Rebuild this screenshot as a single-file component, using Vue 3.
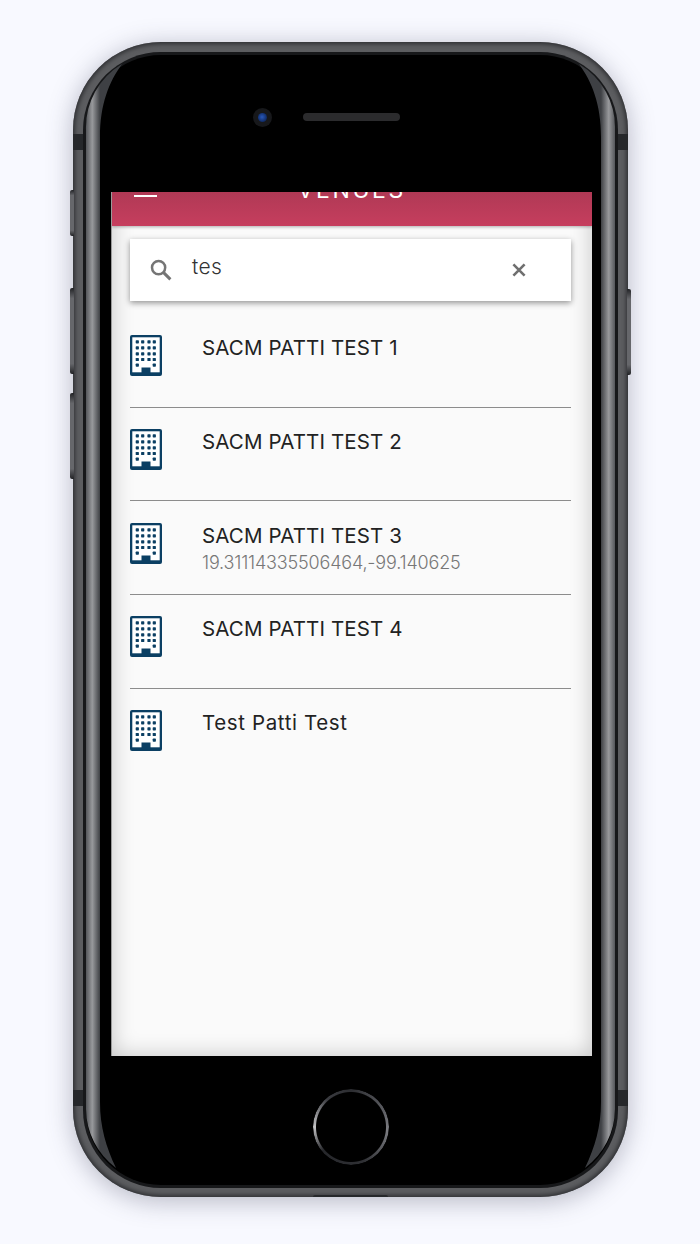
<template>
  <div class="page">
    <div class="phone">
      <span class="side-btn mute"></span>
      <span class="side-btn vol-up"></span>
      <span class="side-btn vol-down"></span>
      <span class="side-btn power"></span>
      <span class="band band-left-top"></span>
      <span class="band band-right-top"></span>
      <span class="band band-left-bottom"></span>
      <span class="band band-right-bottom"></span>
      <span class="bottom-notch"></span>

      <div class="rim">
        <div class="face">
          <div class="top-bezel">
            <div class="camera"><span class="lens"></span></div>
            <div class="speaker"></div>
          </div>

          <div class="screen">
            <header class="app-bar">
              <span class="menu-bar"></span>
              <span class="app-title">VENUES</span>
            </header>

            <div class="search-card">
              <svg class="search-icon" viewBox="0 0 22 22" fill="none" stroke="#757575">
                <circle cx="8.6" cy="8.6" r="6.6" stroke-width="2.5" />
                <path d="M13.6 13.6 L20.4 20.4" stroke-width="3" />
              </svg>
              <span class="search-text">tes</span>
              <svg class="clear-icon" viewBox="0 0 14 14" stroke="#6f6f6f" stroke-width="2.6">
                <path d="M1.4 1.4 L12.6 12.6 M12.6 1.4 L1.4 12.6" />
              </svg>
            </div>

            <div class="venue-list">
              <div v-for="venue in venues" :key="venue.name" class="venue-row">
                <svg class="building" viewBox="0 0 32 41">
                  <rect width="32" height="41" rx="2" fill="#0b3f63" />
                  <rect x="2.3" y="2.3" width="27.4" height="35" fill="#fff" />
                  <rect
                    v-for="(dot, i) in windowDots"
                    :key="i"
                    :x="dot.x"
                    :y="dot.y"
                    width="3.2"
                    height="3.2"
                    rx="0.7"
                    fill="#0b3f63"
                  />
                  <rect x="11.5" y="32.5" width="9" height="7" fill="#0b3f63" />
                </svg>
                <div class="venue-text">
                  <div class="venue-name" :class="{ mixed: venue.mixed }">{{ venue.name }}</div>
                  <div v-if="venue.coords" class="venue-coords">{{ venue.coords }}</div>
                </div>
              </div>
            </div>
          </div>

          <div class="bottom-bezel">
            <div class="home-btn"></div>
          </div>
        </div>
      </div>

      <svg class="sheen" viewBox="0 0 555 1155" fill="none">
        <defs>
          <linearGradient id="sheenL" gradientUnits="userSpaceOnUse" x1="13" x2="27" y1="0" y2="0">
            <stop offset="0" stop-color="#55575b" />
            <stop offset="0.45" stop-color="#98999c" />
            <stop offset="1" stop-color="#3e4044" />
          </linearGradient>
          <linearGradient id="sheenR" gradientUnits="userSpaceOnUse" x1="528" x2="542" y1="0" y2="0">
            <stop offset="0" stop-color="#3e4044" />
            <stop offset="0.55" stop-color="#98999c" />
            <stop offset="1" stop-color="#55575b" />
          </linearGradient>
        </defs>
        <path fill="url(#sheenL)" d="M13 88 A74 74 0 0 1 49 22 C36 40 27 62 27 95 L27 1060 C27 1085 33 1105 43 1126 A74 74 0 0 1 13 1067 Z" />
        <path fill="url(#sheenR)" d="M542 88 A74 74 0 0 0 506 22 C519 40 528 62 528 95 L528 1060 C528 1085 522 1105 512 1126 A74 74 0 0 0 542 1067 Z" />
      </svg>
    </div>
  </div>
</template>

<script setup>
const venues = [
  { name: 'SACM PATTI TEST 1' },
  { name: 'SACM PATTI TEST 2' },
  { name: 'SACM PATTI TEST 3', coords: '19.31114335506464,-99.140625' },
  { name: 'SACM PATTI TEST 4' },
  { name: 'Test Patti Test', mixed: true },
];

const windowDots = [];
const cols = [5.7, 11.1, 17.4, 22.7];
const rows = [5.2, 11.2, 17.2, 22.9, 28.6];
rows.forEach((y, r) => {
  cols.forEach((x, c) => {
    if (r === 4 && (c === 1 || c === 2)) return;
    windowDots.push({ x, y });
  });
});
</script>

<style>
html,
body {
  margin: 0;
  background: #f8f9ff;
}
</style>

<style scoped>
.page {
  width: 700px;
  height: 1244px;
  padding-top: 42px;
  box-sizing: border-box;
  display: flex;
  justify-content: center;
  background: #f8f9ff;
  overflow: hidden;
  font-family: Inter, 'Liberation Sans', sans-serif;
}

.phone {
  position: relative;
  width: 555px;
  height: 1155px;
  margin-left: 1px;
  box-sizing: border-box;
  padding: 10px 10px 9px;
  border-radius: 88px;
  background: #5c5d60;
  box-shadow: inset 0 0 4px 2px #2f3033, 0 4px 26px rgba(60, 65, 90, 0.36);
}

.rim {
  height: 100%;
  box-sizing: border-box;
  padding: 3px;
  border-radius: 78px;
  background: #17181a;
}

.face {
  height: 100%;
  display: flex;
  flex-direction: column;
  align-items: center;
  border-radius: 75px;
  background: #000;
}

.top-bezel {
  height: 136.5px;
  flex-shrink: 0;
  width: 100%;
  display: flex;
  justify-content: center;
  align-items: flex-start;
  gap: 31px;
  padding: 53px 0 0 0;
  box-sizing: border-box;
  margin-left: -48px;
}

.camera {
  width: 19px;
  height: 19px;
  border-radius: 50%;
  background: #17181b;
  display: flex;
  align-items: center;
  justify-content: center;
}

.lens {
  width: 9px;
  height: 9px;
  border-radius: 50%;
  background: radial-gradient(circle at 45% 45%, #2a58b8 0, #123070 60%, #0a1a3a 100%);
}

.speaker {
  width: 97px;
  height: 8px;
  margin-top: 5px;
  border-radius: 4px;
  background: #2b2b2d;
}

.screen {
  width: 481.5px;
  height: 864px;
  flex-shrink: 0;
  box-sizing: border-box;
  margin-left: 1.5px;
  position: relative;
  overflow: hidden;
  background: #fafafa;
  box-shadow: inset 0 0 22px rgba(0, 0, 0, 0.22);
  border-left: 1px solid #9a9a9a;
}

.app-bar {
  height: 34px;
  position: relative;
  overflow: hidden;
  background: linear-gradient(180deg, #b03955 0, #c63e5e 100%);
  box-shadow: 0 1px 3px rgba(0, 0, 0, 0.3);
}

.menu-bar {
  position: absolute;
  left: 22px;
  top: 3px;
  width: 23px;
  height: 2px;
  background: #fff;
}

.app-title {
  position: absolute;
  left: 0;
  right: 0;
  top: -15px;
  text-align: center;
  color: #fff;
  font-size: 23px;
  line-height: 26px;
  letter-spacing: 2.6px;
}

.search-card {
  margin: 13px 21px 0 18.5px;
  height: 62px;
  display: flex;
  align-items: center;
  background: #fff;
  box-shadow: 0 2px 6px rgba(0, 0, 0, 0.42);
}

.search-icon {
  width: 22px;
  height: 22px;
  margin: 1px 0 0 20px;
  flex-shrink: 0;
}

.search-text {
  margin: -6px 0 0 20px;
  font-size: 21px;
  letter-spacing: 0.4px;
  font-weight: 300;
  color: #333;
  flex: 1;
}

.clear-icon {
  width: 14px;
  height: 14px;
  margin: 1px 45px 0 0;
  flex-shrink: 0;
}

.venue-list {
  margin: 0 21px 0 18.5px;
  padding-top: 13.4px;
}

.venue-row {
  height: 93.7px;
  box-sizing: border-box;
  padding-top: 21.5px;
  display: flex;
  border-bottom: 1px solid #8c8c8c;
}

.venue-row:last-child {
  border-bottom: none;
}

.building {
  width: 32px;
  height: 41px;
  flex-shrink: 0;
}

.venue-text {
  margin-left: 40px;
}

.venue-name {
  font-size: 20.5px;
  line-height: 26px;
  letter-spacing: 0.12px;
  color: #222;
}

.venue-name.mixed {
  letter-spacing: 0.62px;
}

.venue-coords {
  margin-top: 3px;
  font-size: 18px;
  line-height: 22px;
  font-weight: 300;
  letter-spacing: -0.18px;
  color: #777;
}

.bottom-bezel {
  flex: 1;
  width: 100%;
  display: flex;
  justify-content: center;
  padding-top: 33px;
  box-sizing: border-box;
}

.home-btn {
  width: 76px;
  height: 76px;
  border-radius: 50%;
  background: conic-gradient(#2c2d31 0, #5a5b60 60deg, #7c7d82 95deg, #2f3034 160deg, #26272b 230deg, #c4c4c6 270deg, #3a3b40 320deg, #2c2d31 360deg);
  -webkit-mask: radial-gradient(circle, transparent 34.5px, #000 35.5px);
  mask: radial-gradient(circle, transparent 34.5px, #000 35.5px);
}

.sheen {
  position: absolute;
  inset: 0;
  width: 555px;
  height: 1155px;
  pointer-events: none;
}

.side-btn {
  position: absolute;
  width: 4px;
  height: 86px;
  background: linear-gradient(180deg, #222326 0, #66676b 12%, #66676b 88%, #222326 100%);
  border-radius: 2px 0 0 2px;
}

.mute {
  left: -3px;
  top: 148px;
  height: 46px;
}

.vol-up {
  left: -3px;
  top: 246px;
}

.vol-down {
  left: -3px;
  top: 351px;
}

.power {
  right: -3px;
  top: 247px;
  border-radius: 0 2px 2px 0;
}

.band {
  position: absolute;
  z-index: 2;
  width: 10px;
  height: 16px;
  background: #26282b;
}

.band-left-top {
  left: 0;
  top: 92px;
}

.band-right-top {
  right: 0;
  top: 92px;
}

.band-left-bottom {
  left: 0;
  bottom: 91px;
}

.band-right-bottom {
  right: 0;
  bottom: 91px;
}

.bottom-notch {
  position: absolute;
  z-index: 2;
  left: 240px;
  bottom: 0;
  width: 75px;
  height: 2px;
  border-radius: 2px 2px 0 0;
  background: #26282b;
}
</style>
